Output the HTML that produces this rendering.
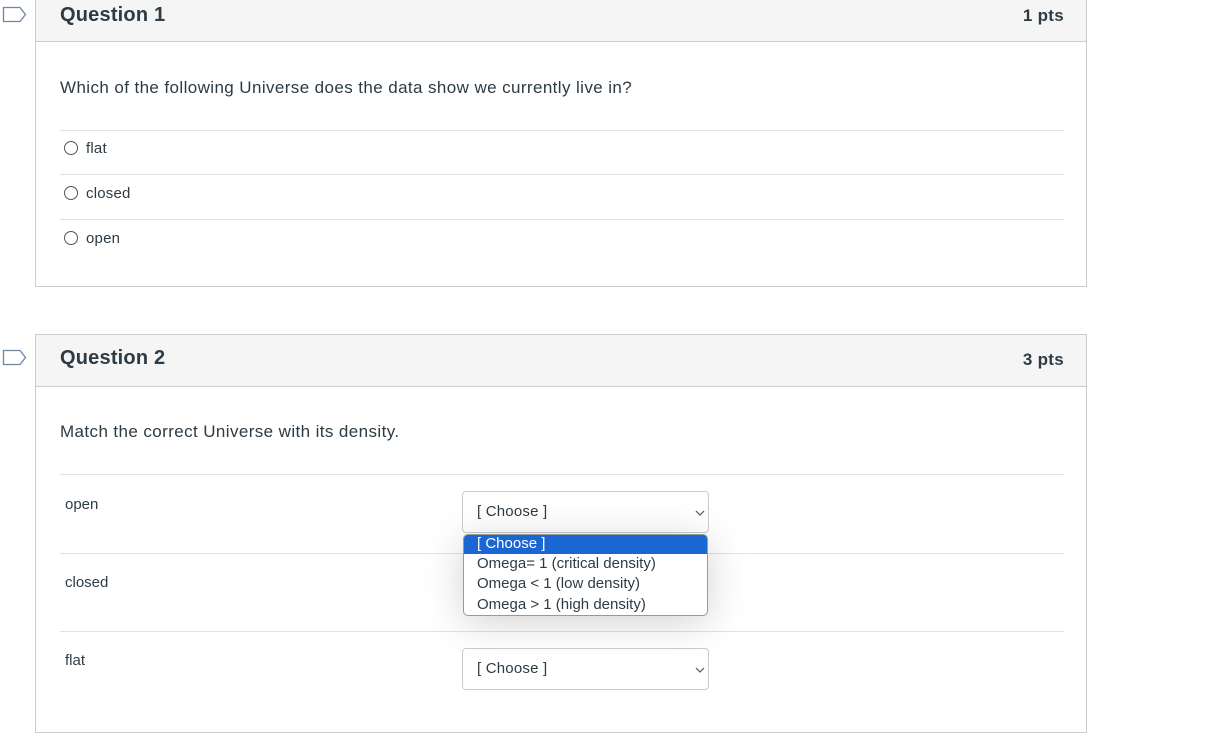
<!DOCTYPE html>
<html><head><meta charset="utf-8"><style>
*{box-sizing:border-box;margin:0;padding:0}
body{width:1212px;height:754px;background:#fff;font-family:"Liberation Sans",sans-serif;color:#2d3b45;position:relative;overflow:hidden}
.a{position:absolute}
.card{position:absolute;left:35px;width:1052px;border:1px solid #c7cdd1;background:#fff}
.hdr{position:absolute;left:0;right:0;top:0;background:#f5f5f5;border-bottom:1px solid #c7cdd1}
.title{position:absolute;left:24px;font-size:20px;font-weight:bold;letter-spacing:0.2px}
.pts{position:absolute;right:22px;font-size:17px;font-weight:bold;letter-spacing:0.3px}
.line{position:absolute;left:24px;width:1004px;height:1px;background:#dfe2e4}
.opt{position:absolute;left:28px;font-size:15px;letter-spacing:0.2px}
.opt i{display:inline-block;width:14px;height:14px;border:1px solid #555;border-radius:50%;vertical-align:-2px;margin-right:8px}
.q{position:absolute;left:24px;font-size:17px;letter-spacing:0.4px}
.sel{position:absolute;left:426px;width:247px;height:42px;border:1px solid #c7cdd1;border-radius:4px;background:#fff;font-size:15px;color:#2d3b45;padding:11px 14px;letter-spacing:0.2px}
.sel span{color:#2d3b45}
.sel svg{position:absolute;right:3px;top:18px}
</style></head><body>
<svg class="a" style="left:2px;top:6px" width="26" height="18"><path d="M1.5 1.5H18L23.5 8.5 18 15.5H1.5Z" fill="none" stroke="#6b87a3" stroke-width="1.3"/></svg>
<svg class="a" style="left:2px;top:349px" width="26" height="18"><path d="M1.5 1.5H18L23.5 8.5 18 15.5H1.5Z" fill="none" stroke="#6b87a3" stroke-width="1.3"/></svg>

<div class="card" style="top:-1px;height:288px">
  <div class="hdr" style="height:42px"></div>
  <div class="title" style="top:4px">Question 1</div>
  <div class="pts" style="top:6px">1 pts</div>
  <div class="q" style="top:78px">Which of the following Universe does the data show we currently live in?</div>
  <div class="line" style="top:130px"></div>
  <div class="opt" style="top:140px"><i></i>flat</div>
  <div class="line" style="top:174px"></div>
  <div class="opt" style="top:185px"><i></i>closed</div>
  <div class="line" style="top:219px"></div>
  <div class="opt" style="top:230px"><i></i>open</div>
</div>

<div class="card" style="top:334px;height:399px">
  <div class="hdr" style="height:52px"></div>
  <div class="title" style="top:12px">Question 2</div>
  <div class="pts" style="top:15px">3 pts</div>
  <div class="q" style="top:87px">Match the correct Universe with its density.</div>
  <div class="line" style="top:139px"></div>
  <div class="a" style="left:29px;top:161px;font-size:15px">open</div>
  <div class="sel" style="top:156px"><span>[ Choose ]</span><svg width="10" height="6"><path d="M1 1l4 4 4-4" fill="none" stroke="#666" stroke-width="1.3"/></svg></div>
  <div class="line" style="top:218px"></div>
  <div class="a" style="left:29px;top:239px;font-size:15px">closed</div>
  <div class="line" style="top:296px"></div>
  <div class="a" style="left:29px;top:317px;font-size:15px">flat</div>
  <div class="sel" style="top:313px"><span>[ Choose ]</span><svg width="10" height="6"><path d="M1 1l4 4 4-4" fill="none" stroke="#666" stroke-width="1.3"/></svg></div>
</div>

<div class="a" style="left:463px;top:534px;width:245px;height:82px;background:#fff;border:1px solid #999;border-radius:5px;box-shadow:0 6px 40px rgba(0,0,0,.18);font-size:15px;line-height:20px;overflow:hidden">
  <div style="background:#1a66d2;color:#fff;padding-left:13px;height:19px;line-height:18px">[ Choose ]</div>
  <div style="padding-left:13px;line-height:20px">Omega= 1 (critical density)</div>
  <div style="padding-left:13px;line-height:20px">Omega &lt; 1 (low density)</div>
  <div style="padding-left:13px;line-height:21px">Omega &gt; 1 (high density)</div>
</div>
</body></html>
